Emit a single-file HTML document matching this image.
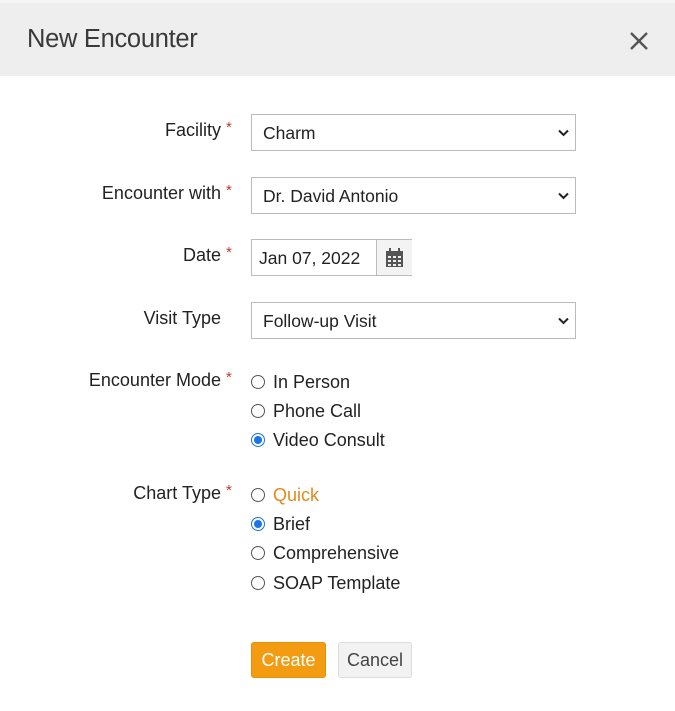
<!DOCTYPE html><html><head><style>
body{margin:0;width:675px;height:711px;background:#fff;font-family:"Liberation Sans",sans-serif;position:relative;overflow:hidden;color:#222}
.hd{position:absolute;left:0;top:0;width:675px;height:76px;background:#eeeeee;border-top:3px solid #f6f6f6;box-sizing:border-box}
.t{position:absolute;left:27px;top:22px;font-size:25.5px;color:#3a3a3a;letter-spacing:-0.3px}
.x{position:absolute;left:629px;top:28px}
.l{position:absolute;right:454px;font-size:18px;color:#222;white-space:nowrap}
.l b{position:absolute;left:100%;margin-left:5px;color:#c0392b;font-weight:normal;font-size:15px;top:-1px}
.s{position:absolute;left:251px;width:325px;height:37px;border:1px solid #bbb;box-sizing:border-box;font-size:17.5px;padding:8px 0 0 11px}
.s svg{position:absolute;right:6px;top:14px}
.r{position:absolute;left:251px;font-size:18px;white-space:nowrap}
.r i{display:inline-block;width:14px;height:14px;border:1px solid #555;border-radius:50%;vertical-align:-1px;margin-right:8px;box-sizing:border-box;position:relative}
.r i.on{border:1px solid #1a73e8}
.r i.on:after{content:"";position:absolute;left:2px;top:2px;width:8px;height:8px;border-radius:50%;background:#1a73e8}
.btn{position:absolute;top:642px;height:36px;box-sizing:border-box;border-radius:3px;font-size:18px;padding-top:7px;text-align:center}
</style></head><body>
<div class="hd"><div class="t">New Encounter</div>
<svg class="x" width="20" height="20" viewBox="0 0 20 20"><path d="M2 2L18 18M18 2L2 18" stroke="#555" stroke-width="2.4"/></svg></div>
<div class="l" style="top:120px">Facility<b>*</b></div>
<div class="s" style="top:114px">Charm<svg width="11" height="8" viewBox="0 0 11 8"><path d="M1 1.5L5.5 6 10 1.5" stroke="#222" stroke-width="2" fill="none"/></svg></div>
<div class="l" style="top:183px">Encounter with<b>*</b></div>
<div class="s" style="top:177px">Dr. David Antonio<svg width="11" height="8" viewBox="0 0 11 8"><path d="M1 1.5L5.5 6 10 1.5" stroke="#222" stroke-width="2" fill="none"/></svg></div>
<div class="l" style="top:245px">Date<b>*</b></div>
<div class="s" style="top:239px;width:161px;padding-left:7px">Jan 07, 2022
<div style="position:absolute;left:124px;top:0;width:35px;height:35px;border-left:1px solid #bbb;background:#f3f3f3"><svg style="position:absolute;left:8px;top:8px" width="19" height="20" viewBox="0 0 19 20"><rect x="1" y="3" width="17" height="16" fill="#555"/><rect x="4" y="0" width="2" height="5" fill="#555"/><rect x="13" y="0" width="2" height="5" fill="#555"/><g fill="#eee"><rect x="3" y="8" width="3" height="2"/><rect x="8" y="8" width="3" height="2"/><rect x="13" y="8" width="3" height="2"/><rect x="3" y="12" width="3" height="2"/><rect x="8" y="12" width="3" height="2"/><rect x="13" y="12" width="3" height="2"/><rect x="3" y="16" width="3" height="2"/><rect x="8" y="16" width="3" height="2"/><rect x="13" y="16" width="3" height="2"/></g></svg></div></div>
<div class="l" style="top:308px;right:454px">Visit Type</div>
<div class="s" style="top:302px">Follow-up Visit<svg width="11" height="8" viewBox="0 0 11 8"><path d="M1 1.5L5.5 6 10 1.5" stroke="#222" stroke-width="2" fill="none"/></svg></div>
<div class="l" style="top:370px">Encounter Mode<b>*</b></div>
<div class="r" style="top:372px"><i></i>In Person</div>
<div class="r" style="top:401px"><i></i>Phone Call</div>
<div class="r" style="top:430px"><i class="on"></i>Video Consult</div>
<div class="l" style="top:483px">Chart Type<b>*</b></div>
<div class="r" style="top:485px"><i></i><span style="color:#e08a1e">Quick</span></div>
<div class="r" style="top:514px"><i class="on"></i>Brief</div>
<div class="r" style="top:543px"><i></i>Comprehensive</div>
<div class="r" style="top:573px"><i></i>SOAP Template</div>
<div class="btn" style="left:251px;width:75px;background:#f39c12;color:#fff;border:1px solid #e8900a">Create</div>
<div class="btn" style="left:338px;width:74px;background:#f2f2f2;color:#444;border:1px solid #ddd">Cancel</div>
</body></html>
